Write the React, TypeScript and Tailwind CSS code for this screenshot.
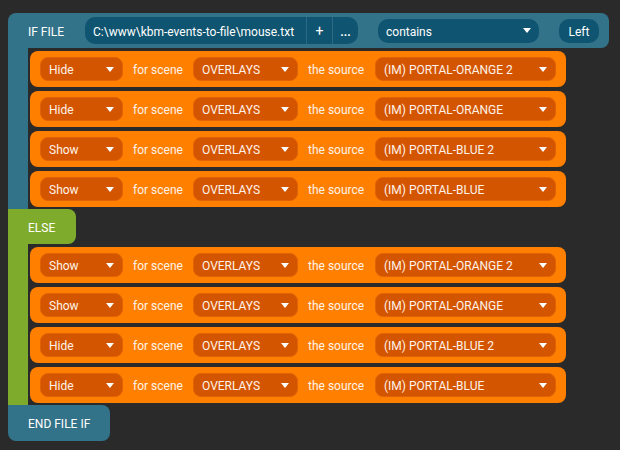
const Caret = () => (
  <svg width="8" height="5" viewBox="0 0 8 5" className="shrink-0">
    <path d="M0 0 L8 0 L4 5 Z" fill="#ffffff" />
  </svg>
);

type Row = { action: string; source: string };

const ifRows: Row[] = [
  { action: "Hide", source: "(IM) PORTAL-ORANGE 2" },
  { action: "Hide", source: "(IM) PORTAL-ORANGE" },
  { action: "Show", source: "(IM) PORTAL-BLUE 2" },
  { action: "Show", source: "(IM) PORTAL-BLUE" },
];

const elseRows: Row[] = [
  { action: "Show", source: "(IM) PORTAL-ORANGE 2" },
  { action: "Show", source: "(IM) PORTAL-ORANGE" },
  { action: "Hide", source: "(IM) PORTAL-BLUE 2" },
  { action: "Hide", source: "(IM) PORTAL-BLUE" },
];

// pt-[2px] on text nudges the glyphs down 1px to sit like the original
const Select = ({ label, width }: { label: string; width: string }) => (
  <div
    className={`${width} h-6 flex items-center justify-between pl-2 pr-[8px] rounded-lg bg-[#d45500] border border-[#e06208]`}
  >
    <span className="pt-[2px]">{label}</span>
    <Caret />
  </div>
);

const ActionRow = ({ row }: { row: Row }) => (
  <div className="w-[536px] h-9 flex items-center pl-[10px] rounded-lg bg-[#ff7f00] text-[#fdf2ea]">
    <Select label={row.action} width="w-[83px]" />
    <span className="ml-[10px] w-[60px] pt-[2px]">for scene</span>
    <Select label="OVERLAYS" width="w-[105px]" />
    <span className="ml-[10px] w-[67px] pt-[2px]">the source</span>
    <Select label={row.source} width="w-[181px]" />
  </div>
);

const App = () => (
  <div
    className="w-[620px] h-[450px] bg-[#2a2a2a] pt-[13px] pl-2 text-[12px] text-white"
    style={{ fontFamily: "Roboto, 'Liberation Sans', sans-serif" }}
  >
    {/* IF FILE header */}
    <div className="w-[601px] h-[35px] flex items-center bg-[#337389] rounded-tl-lg rounded-r-lg">
      <span className="ml-5 w-[57px] pt-[2px]">IF FILE</span>
      <div className="w-[273px] h-[27px] flex items-stretch bg-[#0f5470] rounded-[10px]">
        <div className="w-[221px] flex items-center pl-2 pt-[2px]">C:\www\kbm-events-to-file\mouse.txt</div>
        <div className="w-px bg-[#2b6a82]" />
        <div className="w-[25px] flex items-center justify-center text-[14px] pt-[2px]">+</div>
        <div className="w-px bg-[#2b6a82]" />
        <div className="w-[25px] flex items-center justify-center font-bold pt-[2px]">...</div>
      </div>
      <div className="ml-5 w-[161px] h-6 flex items-center justify-between pl-2 pr-[8px] rounded-[10px] bg-[#0f5470]">
        <span className="pt-[2px]">contains</span>
        <Caret />
      </div>
      <div className="ml-5 w-10 h-6 flex items-center justify-center rounded-[10px] bg-[#0f5470] pt-[2px]">
        Left
      </div>
    </div>

    <div className="flex">
      <div className="w-5 bg-[#337389]" />
      <div className="flex flex-col gap-1 pt-[3px] pb-[2px] pl-[2px]">
        {ifRows.map((r, i) => (
          <ActionRow key={i} row={r} />
        ))}
      </div>
    </div>

    {/* ELSE */}
    <div className="w-[68px] h-[35px] flex items-center pl-5 pt-[2px] bg-[#7fab2d] rounded-r-lg">ELSE</div>

    <div className="flex">
      <div className="w-5 bg-[#7fab2d]" />
      <div className="flex flex-col gap-1 pt-[3px] pb-[2px] pl-[2px]">
        {elseRows.map((r, i) => (
          <ActionRow key={i} row={r} />
        ))}
      </div>
    </div>

    {/* END FILE IF */}
    <div className="w-[102px] h-9 flex items-center pl-5 pt-[2px] bg-[#337389] rounded-r-lg rounded-bl-lg">
      END FILE IF
    </div>
  </div>
);

export default App;
